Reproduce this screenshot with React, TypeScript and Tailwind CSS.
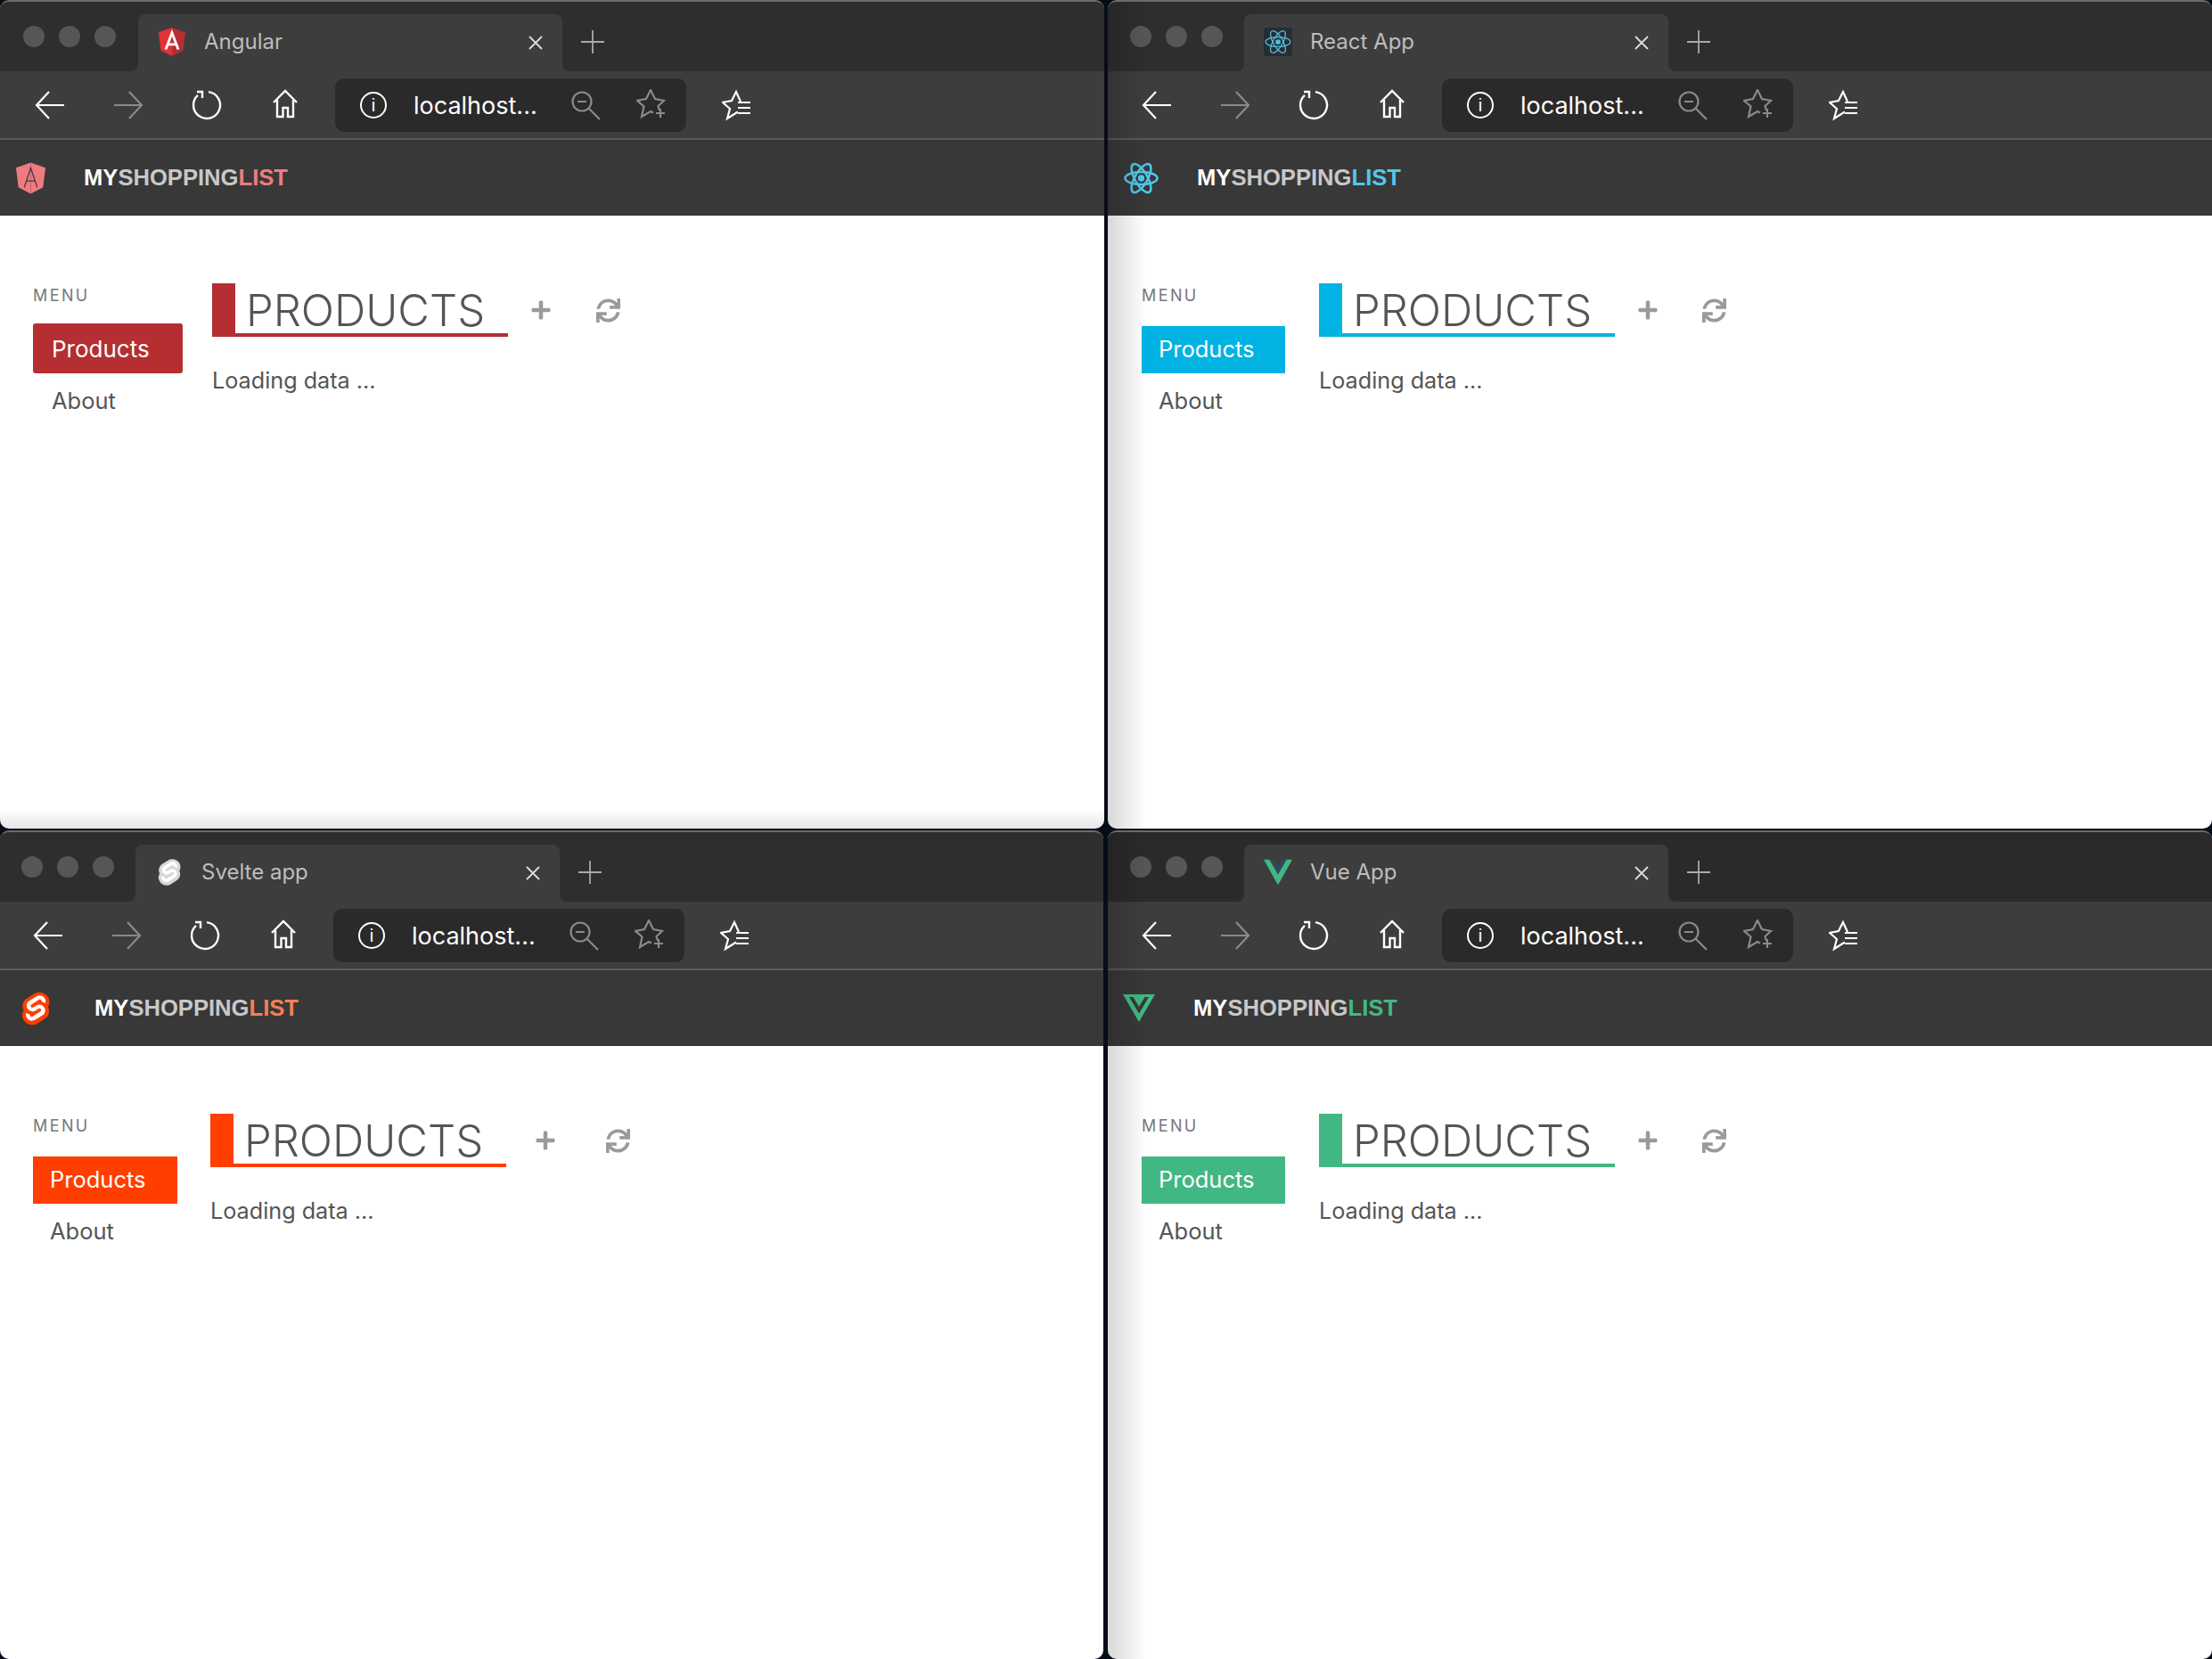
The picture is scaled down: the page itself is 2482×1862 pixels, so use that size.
import React from "react";
import { FaPlus, FaSync } from "react-icons/fa";

type Theme = {
  title: string;
  favicon: React.ReactNode;
  logo: React.ReactNode;
  winClass: string;
  stripClass: string;
  lightsClass: string;
  toolbarClass: string;
  brandGapClass: string;
  brandTextClass: string;
  logoSlotClass: string;
  sideClass: string;
  activeClass: string;
  aboutClass: string;
  headClass: string;
  plusClass: string;
  syncClass: string;
  shade: boolean;
  bottomShade: boolean;
};

const AngularIcon = ({ dim }: { dim?: boolean }) => (
  <svg viewBox="0 0 32 34" className="h-full w-full">
    <polygon points="16,0 0,5.6 2.6,27 16,34" fill={dim ? "#ee7b80" : "#e23237"} />
    <polygon points="16,0 32,5.6 29.4,27 16,34" fill={dim ? "#ee7b80" : "#b52e31"} />
    {dim ? (
      <path d="M9 27 16 6l7 21M11.5 20h9" fill="none" stroke="#4a3a3c" strokeWidth="1.3" />
    ) : (
      <path d="M8.5 26 16 6l7.5 20M11 20h10" fill="none" stroke="#fff" strokeWidth="3" />
    )}
  </svg>
);

const ReactIcon = ({ width = 1.7, color = "#53c1de" }: { width?: number; color?: string }) => (
  <svg viewBox="-20 -18 40 36" className="h-full w-full">
    <g fill="none" stroke={color} strokeWidth={width}>
      <ellipse rx="18.5" ry="7.2" />
      <ellipse rx="18.5" ry="7.2" transform="rotate(60)" />
      <ellipse rx="18.5" ry="7.2" transform="rotate(120)" />
    </g>
    <circle r="3.8" fill={color} />
  </svg>
);

const SvelteIcon = ({ outer, inner }: { outer: string; inner: string }) => (
  <svg viewBox="0 0 123 134" className="h-full w-full">
    <path
      fill={outer}
      d="M110.43,18.13C98.11.52,73.8-4.69,56.23,6.53L25.4,26.18A35.37,35.37,0,0,0,9.42,49.88a37.25,37.25,0,0,0,3.67,23.91A35.48,35.48,0,0,0,7.8,87a37.7,37.7,0,0,0,6.45,28.54c12.32,17.62,36.64,22.83,54.2,11.61L99.28,107.5a35.46,35.46,0,0,0,16-23.7,37.28,37.28,0,0,0-3.68-23.91,35.43,35.43,0,0,0,5.29-13.22,37.75,37.75,0,0,0-6.46-28.54"
    />
    <path
      fill={inner}
      d="M52.39,115.3a24.51,24.51,0,0,1-26.31-9.75,22.68,22.68,0,0,1-3.88-17.16,21.29,21.29,0,0,1,.73-2.88l.58-1.77,1.58,1.16a39.72,39.72,0,0,0,12.06,6l1.14.35-.1,1.14a6.88,6.88,0,0,0,1.24,4.57,7.38,7.38,0,0,0,7.92,2.94,6.76,6.76,0,0,0,1.89-.83L81.07,78.91a6.42,6.42,0,0,0,2.9-4.29,6.85,6.85,0,0,0-1.17-5.17,7.39,7.39,0,0,0-7.92-2.94,6.91,6.91,0,0,0-1.89.83L61.22,75.08a22.6,22.6,0,0,1-6,2.64A24.51,24.51,0,0,1,28.9,68a22.67,22.67,0,0,1-3.87-17.15A21.27,21.27,0,0,1,34.65,36.6L65.5,17a22.48,22.48,0,0,1,6-2.65,24.51,24.51,0,0,1,26.31,9.75,22.68,22.68,0,0,1,3.88,17.16,21.29,21.29,0,0,1-.73,2.88l-.58,1.77-1.58-1.16a39.72,39.72,0,0,0-12.06-6L85.59,38.4l.1-1.14a6.88,6.88,0,0,0-1.24-4.57,7.38,7.38,0,0,0-7.92-2.94,6.76,6.76,0,0,0-1.89.83L44.1,50.27a6.42,6.42,0,0,0-2.9,4.29,6.85,6.85,0,0,0,1.17,5.17,7.39,7.39,0,0,0,7.92,2.94,6.91,6.91,0,0,0,1.89-.83l11.77-7.5a22.6,22.6,0,0,1,6-2.64,24.51,24.51,0,0,1,26.31,9.75,22.67,22.67,0,0,1,3.87,17.15,21.27,21.27,0,0,1-9.62,14.25L59.64,112.5a22.48,22.48,0,0,1-6,2.65"
    />
  </svg>
);

const VueFavicon = () => (
  <svg viewBox="0 0 36 32" className="h-full w-full">
    <polygon points="0,0 7.2,0 18,18.5 28.8,0 36,0 18,32" fill="#41b883" />
    <polygon points="7.2,0 13,0 18,8.5 23,0 28.8,0 18,18.5" fill="#35495e" />
  </svg>
);

const VueLogo = () => (
  <svg viewBox="0 0 36 31" className="h-full w-full">
    <polygon points="0,0 36,0 18,31" fill="#41b883" />
    <polygon points="7,3 11.500,3 18,14 24.500,3 29,3 18,21.500" fill="#383838" />
  </svg>
);

const themes: Theme[] = [
  {
    title: "Angular",
    favicon: <AngularIcon />,
    logo: <AngularIcon dim />,
    winClass: "w-[1239px]",
    stripClass: "bg-[#2e2e2e]",
    lightsClass: "w-[155px] pl-[26px]",
    toolbarClass: "pl-[12px]",
    brandGapClass: "pl-[18px]",
    logoSlotClass: "h-[36px] w-[33px] mr-[43px]",
    brandTextClass: "text-[#ee7b80]",
    sideClass: "pl-[37px] w-[238px]",
    activeClass: "mt-[17px] bg-[#b52e31] w-[168px] h-[56px] pl-[21px] rounded-[3px] text-[26px]",
    aboutClass: "pl-[21px]",
    headClass: "border-[#b52e31]",
    plusClass: "ml-[25px]",
    syncClass: "ml-[50px]",
    shade: false,
    bottomShade: true,
  },
  {
    title: "React App",
    favicon: (
      <div className="h-[32px] w-[32px] rounded-[3px] bg-[#282c34] p-[1px]">
        <ReactIcon />
      </div>
    ),
    logo: <ReactIcon width={2.6} color="#4fc8ea" />,
    winClass: "w-[1239px]",
    stripClass: "bg-[#2e2e2e]",
    lightsClass: "w-[153px] pl-[25px]",
    toolbarClass: "pl-[11px]",
    brandGapClass: "pl-[18px]",
    logoSlotClass: "h-[36px] w-[39px] mr-[43px]",
    brandTextClass: "text-[#4fc8ea]",
    sideClass: "pl-[38px] w-[237px]",
    activeClass: "mt-[20px] bg-[#00b3e3] w-[161px] h-[53px] pl-[19px] text-[25.5px]",
    aboutClass: "pl-[19px]",
    headClass: "border-[#00b3e3]",
    plusClass: "ml-[25px]",
    syncClass: "ml-[49px]",
    shade: true,
    bottomShade: false,
  },
  {
    title: "Svelte app",
    favicon: (
      <div className="h-[32px] w-[32px] p-[1px]">
        <SvelteIcon outer="#d8d8d8" inner="#ffffff" />
      </div>
    ),
    logo: <SvelteIcon outer="#ff3e00" inner="#ffffff" />,
    winClass: "w-[1238px]",
    stripClass: "bg-[#2e2e2e]",
    lightsClass: "w-[152px] pl-[24px]",
    toolbarClass: "pl-[10px]",
    brandGapClass: "pl-[23px]",
    logoSlotClass: "h-[38px] w-[34px] mr-[49px]",
    brandTextClass: "text-[#f47f55]",
    sideClass: "pl-[37px] w-[236px]",
    activeClass: "mt-[20px] bg-[#ff3e00] w-[162px] h-[53px] pl-[19px] text-[25.5px]",
    aboutClass: "pl-[19px]",
    headClass: "border-[#ff3e00]",
    plusClass: "ml-[32px]",
    syncClass: "ml-[56px]",
    shade: false,
    bottomShade: false,
  },
  {
    title: "Vue App",
    favicon: <VueFavicon />,
    logo: <VueLogo />,
    winClass: "w-[1239px]",
    stripClass: "bg-[#2a2a2a]",
    lightsClass: "w-[153px] pl-[25px]",
    toolbarClass: "pl-[11px]",
    brandGapClass: "pl-[17px]",
    logoSlotClass: "h-[31px] w-[36px] mr-[43px]",
    brandTextClass: "text-[#41b883]",
    sideClass: "pl-[38px] w-[237px]",
    activeClass: "mt-[20px] bg-[#41b883] w-[161px] h-[53px] pl-[19px] text-[25.5px]",
    aboutClass: "pl-[19px]",
    headClass: "border-[#41b883]",
    plusClass: "ml-[25px]",
    syncClass: "ml-[49px]",
    shade: true,
    bottomShade: false,
  },
];

const ToolIcon = ({ children }: { children: React.ReactNode }) => (
  <svg width="36" height="36" viewBox="0 0 36 36" fill="none" strokeWidth="2.2">
    {children}
  </svg>
);

const Toolbar = ({ className }: { className: string }) => (
  <div className={`flex h-[75px] items-center bg-[#3d3d3d] ${className}`}>
    <div className="flex w-[88px] justify-center">
      <ToolIcon>
        <path d="M34 18H3M17 3 3 18l14 15" stroke="#fff" />
      </ToolIcon>
    </div>
    <div className="flex w-[88px] justify-center">
      <ToolIcon>
        <path d="M2 18h31M19 3l14 15-14 15" stroke="#8a8a8a" />
      </ToolIcon>
    </div>
    <div className="flex w-[88px] justify-center">
      <ToolIcon>
        <path d="M20 3.1A15 15 0 1 1 8 6.8" stroke="#fff" strokeWidth="2.4" />
        <path d="M7 3h6v7" stroke="#fff" strokeWidth="2.4" />
      </ToolIcon>
    </div>
    <div className="flex w-[88px] justify-center">
      <ToolIcon>
        <path d="M5 15 18 2l13 13M9 12v19h6.5V21h5.5v10H27V12" stroke="#fff" strokeWidth="2.4" />
      </ToolIcon>
    </div>
    <div className="ml-[12px] flex h-[60px] w-[394px] items-center rounded-[10px] bg-[#2a2a2a]">
      <div className="ml-[28px] flex h-[30px] w-[30px] shrink-0 items-center justify-center rounded-full border-2 border-white">
        <span className="font-['Liberation_Sans',sans-serif] text-[20px] leading-none font-normal text-white">i</span>
      </div>
      <span className="ml-[30px] w-[150px] shrink-0 pt-[2px] font-['Inter',sans-serif] text-[27px] leading-none text-white">localhost...</span>
      <div className="ml-[26px] flex">
        <svg width="34" height="34" viewBox="0 0 34 34" fill="none" stroke="#8a8a8a" strokeWidth="2.2">
          <circle cx="13" cy="13" r="10.5" />
          <path d="M8 13h10M20.5 20.5 33 33" />
        </svg>
      </div>
      <div className="ml-[40px] flex">
        <svg width="36" height="36" viewBox="0 0 36 36" fill="none" stroke="#8a8a8a" strokeWidth="2.2">
          <path d="M26 24l-1.500-5L31 13l-10-2L16 1l-5 10-10 2 7.500 6.500L6 31l10-6 3 1.500" />
          <path d="M27 22v10M22 27h10" />
        </svg>
      </div>
    </div>
    <div className="ml-[40px] flex">
      <svg width="36" height="36" viewBox="0 0 36 36" fill="none" stroke="#fff" strokeWidth="2.2">
        <path d="M21 14 16 3l-5 10-10 2 8 7-3 11 12-7.500" />
        <path d="M18 15h14M18 21h14M18 27h14" />
      </svg>
    </div>
  </div>
);

const BrowserWindow = ({ t }: { t: Theme }) => (
  <div className={`relative flex h-[930px] flex-col overflow-hidden rounded-[10px] border-t-2 border-[#6b6b6b] bg-white ${t.winClass}`}>
    {/* tab strip */}
    <div className="flex h-[78px] shrink-0 bg-[#3d3d3d]">
      <div className={`flex items-center gap-[16px] rounded-br-[8px] ${t.stripClass} ${t.lightsClass}`}>
        <span className="h-[24px] w-[24px] rounded-full bg-[#565656]" />
        <span className="h-[24px] w-[24px] rounded-full bg-[#565656]" />
        <span className="h-[24px] w-[24px] rounded-full bg-[#565656]" />
      </div>
      <div className={`w-[476px] pt-[14px] ${t.stripClass}`}>
        <div className="flex h-[64px] items-center rounded-t-[8px] bg-[#3d3d3d] pr-[22px] pl-[22px]">
          <div className="mb-[3px] h-[32px] w-[32px] shrink-0">{t.favicon}</div>
          <span className="mb-[2px] ml-[20px] flex-1 font-['Inter',sans-serif] text-[24px] text-[#bdbdbd]">{t.title}</span>
          <svg width="16" height="16" viewBox="0 0 16 16" stroke="#ddd" strokeWidth="1.8">
            <path d="M1 1l14 14M15 1 1 15" />
          </svg>
        </div>
      </div>
      <div className={`flex flex-1 items-center rounded-bl-[8px] pt-[12px] pl-[21px] ${t.stripClass}`}>
        <svg width="26" height="26" viewBox="0 0 26 26" stroke="#aaa" strokeWidth="1.8">
          <path d="M13 0v26M0 13h26" />
        </svg>
      </div>
    </div>

    <Toolbar className={t.toolbarClass} />
    <div className="h-[2px] shrink-0 bg-[#5a5a5a]" />

    {/* app header */}
    <div className={`flex h-[85px] shrink-0 items-center bg-[#383838] ${t.brandGapClass}`}>
      <div className={`shrink-0 ${t.logoSlotClass}`}>{t.logo}</div>
      <span className="font-['Liberation_Sans',sans-serif] text-[25.6px] leading-none font-bold text-[#c8c8c8]">
        <span className="text-white">MY</span>
        SHOPPING
        <span className={t.brandTextClass}>LIST</span>
      </span>
    </div>

    {/* page */}
    <div className="flex flex-1 pt-[76px] font-['Inter',sans-serif]">
      <div className={`shrink-0 ${t.sideClass}`}>
        <div className="text-[18px] leading-[28px] tracking-[2.4px] text-[#777]">MENU</div>
        <div className={`flex items-center text-white ${t.activeClass}`}>Products</div>
        <div className={`mt-[6px] flex h-[50px] items-center text-[25.5px] text-[#555] ${t.aboutClass}`}>About</div>
      </div>
      <div>
        <div className="flex items-center">
          <div className={`flex h-[60px] w-[332px] items-center border-b-4 border-l-[26px] pt-[4px] pl-[12px] text-[49px] leading-none font-light text-[#555] ${t.headClass}`}>
            PRODUCTS
          </div>
          <FaPlus className={`text-[24px] text-[#9a9a9a] ${t.plusClass}`} />
          <FaSync className={`text-[27px] text-[#9a9a9a] ${t.syncClass}`} />
        </div>
        <div className="mt-[33px] text-[25.2px] leading-[32px] text-[#555]">Loading data ...</div>
      </div>
    </div>

    {t.shade && <div className="absolute inset-y-0 left-0 w-[44px] bg-gradient-to-r from-black/15 to-transparent" />}
    {t.bottomShade && <div className="absolute inset-x-0 bottom-0 h-[22px] bg-gradient-to-t from-black/10 to-transparent" />}
  </div>
);

export default function App() {
  return (
    <div className="h-[1862px] w-[2482px] overflow-hidden bg-[#070d18]">
      <div className="grid grid-cols-[1239px_1239px] grid-rows-[930px_930px] gap-x-[4px] gap-y-[2px]">
        {themes.map((t) => (
          <BrowserWindow key={t.title} t={t} />
        ))}
      </div>
    </div>
  );
}
